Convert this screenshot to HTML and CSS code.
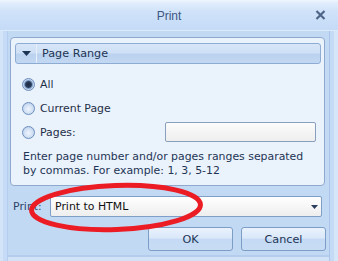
FILE: index.html
```html
<!DOCTYPE html>
<html>
<head>
<meta charset="utf-8">
<link rel="stylesheet" href="styles.css">
</head>
<body>
<div class="window">
  <div class="titlebar">
    <span class="tb-spacer"></span>
    <span class="title">Print</span>
    <span class="close">
      <svg width="11" height="10" viewBox="0 0 11 10"><path d="M1.5 1 L9.5 9 M9.5 1 L1.5 9" stroke="#4f6588" stroke-width="2.2" fill="none"/></svg>
    </span>
  </div>
  <div class="content">
    <div class="group">
      <div class="group-header">
        <span class="hdr-toggle"><svg width="9" height="5" viewBox="0 0 9 5"><path d="M0 0 H9 L4.5 5 Z" fill="#1d3555"/></svg></span>
        <span class="hdr-title">Page Range</span>
      </div>
      <div class="options">
        <div class="opt"><span class="radio checked"></span><span class="opt-label">All</span></div>
        <div class="opt"><span class="radio"></span><span class="opt-label">Current Page</span></div>
        <div class="opt"><span class="radio"></span><span class="opt-label">Pages:</span><span class="pages-input"></span></div>
      </div>
      <p class="hint">Enter page number and/or pages ranges separated<br>by commas. For example: 1, 3, 5-12</p>
    </div>
    <div class="printer-row">
      <span class="printer-label">Print:</span>
      <div class="combo">
        <span class="combo-text">Print to HTML</span>
        <svg width="7" height="4" viewBox="0 0 7 4"><path d="M0 0 H7 L3.5 4 Z" fill="#2a3f5e"/></svg>
      </div>
    </div>
    <div class="buttons">
      <span class="btn">OK</span>
      <span class="btn">Cancel</span>
    </div>
  </div>
  <svg class="annotation" width="338" height="261" viewBox="0 0 338 261">
    <ellipse cx="116" cy="207.5" rx="84.5" ry="22" transform="rotate(-2 116 207.5)" fill="none" stroke="#ec1c24" stroke-width="5"/>
  </svg>
</div>
</body>
</html>
```
FILE: styles.css
```css
html, body {
  margin: 0;
  padding: 0;
}
body {
  width: 338px;
  height: 261px;
  overflow: hidden;
  background: #c2d9f4;
  font-family: "DejaVu Sans", Verdana, sans-serif;
  font-size: 10.9px;
  color: #1e3350;
}
.window {
  position: relative;
  width: 338px;
  height: 261px;
  background: #c2d9f4;
  box-shadow: inset 3px 0 0 #d3e4f8, inset 7px 0 0 #c6dcf6, inset 8px 0 0 #b5cdee, inset -4px 0 0 #d6e6f9, inset -8px 0 0 #c4daf5, inset -9px 0 0 #a9c4e8, inset 0 -4px 0 #d3e3f7, inset 0 -6px 0 #b4cced;
}
.titlebar {
  height: 30px;
  display: grid;
  grid-template-columns: 1fr auto 1fr;
  align-items: center;
  background: linear-gradient(#eef5fe 0px, #e1edfc 3px, #cfe2f9 12px, #c5dbf7 29px);
  border-bottom: 1px solid #dcebfc;
}
.title {
  font-family: "Liberation Sans", Arial, sans-serif;
  font-size: 12px;
  color: #3d5783;
  padding-top: 1px;
}
.close {
  justify-self: end;
  margin-right: 12px;
  display: flex;
}
.content {
  padding: 6px 12px 0 10px;
  display: flex;
  flex-direction: column;
}
.group {
  margin-right: 1px;
  border: 1px solid #8ea9cd;
  border-radius: 4px;
  background: #eaf2fc;
  padding: 0 0 7px 0;
  display: flex;
  flex-direction: column;
}
.group-header {
  box-sizing: border-box;
  height: 21px;
  margin: 5px 3px 0 4px;
  border: 1px solid #8eabd3;
  border-radius: 3px;
  background: linear-gradient(#d7e6f8 0%, #cfe0f6 45%, #bad2ef 55%, #c3d8f2 100%);
  display: flex;
  align-items: center;
}
.hdr-toggle {
  width: 20px;
  height: 100%;
  display: flex;
  align-items: center;
  justify-content: center;
  border-right: 1px solid #e6eefa;
}
.hdr-title {
  margin-left: 5px;
  color: #1e3555;
  font-size: 11.2px;
}
.options {
  margin-top: 8px;
  padding-left: 11px;
  display: flex;
  flex-direction: column;
}
.opt {
  height: 24px;
  display: flex;
  align-items: center;
}
.radio {
  box-sizing: border-box;
  width: 13px;
  height: 13px;
  border-radius: 50%;
  border: 1px solid #6f8fbd;
  background: radial-gradient(circle at 50% 55%, #eef4fc 0%, #d6e4f6 45%, #a9c2e4 100%);
  margin-right: 5px;
}
.radio.checked {
  background: radial-gradient(circle at 50% 50%, #1c2a40 0%, #2b3e5c 38%, #6f8cb6 48%, #c6d8f0 65%, #a9c2e4 100%);
}
.opt-label {
  color: #1e2f48;
}
.pages-input {
  box-sizing: border-box;
  margin-left: auto;
  margin-right: 8px;
  width: 151px;
  height: 20px;
  border: 1px solid #8a9fbd;
  border-radius: 2px;
  background: linear-gradient(#fbfbfb, #eeeeee);
}
.hint {
  margin: 6px 0 0 0;
  padding-left: 12px;
  line-height: 14px;
  color: #1e3555;
  white-space: nowrap;
}
.printer-row {
  margin-top: 10px;
  height: 21px;
  display: flex;
  align-items: center;
}
.printer-label {
  width: 40px;
  padding-left: 3px;
  box-sizing: border-box;
  color: #2e4566;
}
.combo {
  box-sizing: border-box;
  width: 272px;
  height: 21px;
  border: 1px solid #7f9fc8;
  border-radius: 2px;
  background: linear-gradient(#ffffff, #eeeeee);
  display: flex;
  align-items: center;
  justify-content: space-between;
  padding: 0 3px 0 4px;
}
.combo-text {
  color: #111;
}
.buttons {
  margin-top: 10px;
  display: flex;
  justify-content: flex-end;
  gap: 8px;
}
.btn {
  box-sizing: border-box;
  width: 85px;
  height: 24px;
  border: 1px solid #7c9dc6;
  border-radius: 3px;
  background: linear-gradient(#eaf2fd 0%, #dae8f9 45%, #c4daf4 52%, #c8dcf4 100%);
  display: flex;
  align-items: center;
  justify-content: center;
  color: #1e3555;
  font-size: 11.2px;
}
.annotation {
  position: absolute;
  left: 0;
  top: 0;
  pointer-events: none;
}
```
